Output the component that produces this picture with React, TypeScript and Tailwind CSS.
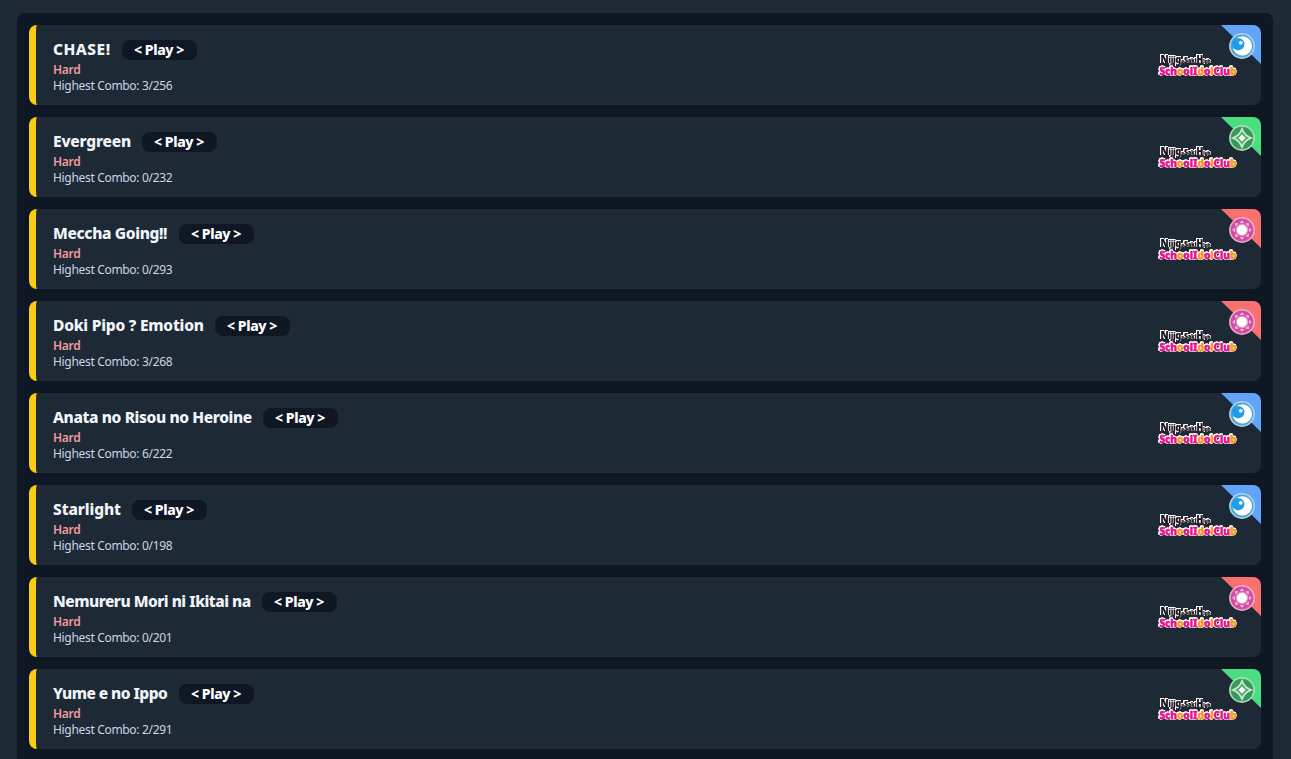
import React from "react";

type Attribute = "cool" | "pure" | "smile";

interface Song {
  title: string;
  combo: string;
  attribute: Attribute;
  titleClass: string;
}

const songs: Song[] = [
  { title: "CHASE!", combo: "3/256", attribute: "cool", titleClass: "w-[69px] tracking-[0.5px]" },
  { title: "Evergreen", combo: "0/232", attribute: "pure", titleClass: "w-[89px] tracking-[-0.2px]" },
  { title: "Meccha Going!!", combo: "0/293", attribute: "smile", titleClass: "w-[126px] tracking-[-0.35px]" },
  { title: "Doki Pipo ? Emotion", combo: "3/268", attribute: "smile", titleClass: "w-[162px] tracking-[-0.23px]" },
  { title: "Anata no Risou no Heroine", combo: "6/222", attribute: "cool", titleClass: "w-[210px] tracking-[-0.38px]" },
  { title: "Starlight", combo: "0/198", attribute: "cool", titleClass: "w-[79px] tracking-[-0.1px]" },
  { title: "Nemureru Mori ni Ikitai na", combo: "0/201", attribute: "smile", titleClass: "w-[209px] tracking-[-0.5px]" },
  { title: "Yume e no Ippo", combo: "2/291", attribute: "pure", titleClass: "w-[126px] tracking-[-0.54px]" },
];

const cornerColor: Record<Attribute, string> = {
  cool: "#60a5fa",
  pure: "#4ade80",
  smile: "#f87171",
};

function AttributeCorner({ attribute }: { attribute: Attribute }) {
  return (
    <svg className="absolute right-0 top-0" width="40" height="40" viewBox="0 0 40 40">
      <path d="M0 0H40V39Z" fill={cornerColor[attribute]} />
      {attribute === "cool" && (
        <g>
          <circle cx="21" cy="21" r="12.9" fill="#b9d3e2" />
          <circle cx="21" cy="21" r="11.4" fill="#45a9df" />
          <circle cx="21.4" cy="20.9" r="9.6" fill="#fff" />
          <circle cx="17.2" cy="19.2" r="6.2" fill="#209de8" />
          <circle cx="19.8" cy="17.8" r="1.9" fill="#fff" />
        </g>
      )}
      {attribute === "pure" && (
        <g>
          <circle cx="21" cy="21" r="12.9" fill="#a5dfb5" />
          <circle cx="21" cy="21" r="11.2" fill="#37985a" />
          <path d="M21 12Q23.5 18.5 30 21Q23.5 23.5 21 30Q18.5 23.5 12 21Q18.5 18.5 21 12Z" fill="#58aa74" stroke="#cdebd2" strokeWidth="1.8" />
          <path d="M21 17.5L24.5 21L21 24.5L17.5 21Z" fill="#f5fff4" />
        </g>
      )}
      {attribute === "smile" && (
        <g>
          <circle cx="21" cy="21" r="12.9" fill="#edb1cb" />
          <circle cx="21" cy="21" r="11.4" fill="#d44ba3" />
          {[0, 45, 90, 135, 180, 225, 270, 315].map((angle) => (
            <path key={angle} d="M18.7 14L21 11.2L23.3 14Z" fill="#f5bedc" transform={`rotate(${angle} 21 21)`} />
          ))}
          <circle cx="21" cy="21" r="6.2" fill="#e99cca" />
          <circle cx="21" cy="21" r="5" fill="#fff" />
        </g>
      )}
    </svg>
  );
}

const pink = "#e8148c";
const orange = "#f59a22";

function ClubLogo() {
  return (
    <svg
      className="h-8 w-[82px] shrink-0 [filter:drop-shadow(0.7px_0_0_#fff)_drop-shadow(-0.7px_0_0_#fff)_drop-shadow(0_0.7px_0_#fff)_drop-shadow(0_-0.7px_0_#fff)]"
      viewBox="0 0 82 32"
    >
      <g fontFamily="'Noto Sans', sans-serif" fontWeight="900" strokeLinejoin="round">
        <text x="3.5" y="13.5" fill="#191018" stroke="#191018" strokeWidth="0.2" fontSize="7" textLength="50" lengthAdjust="spacingAndGlyphs">
          <tspan fontSize="11">N</tspan>
          <tspan fontSize="8">i</tspan>
          <tspan fontSize="8">j</tspan>
          <tspan fontSize="8">i</tspan>
          <tspan fontSize="10">g</tspan>
          <tspan fontSize="5">a</tspan>
          <tspan fontSize="8">S</tspan>
          <tspan fontSize="6">aki</tspan>
          <tspan fontSize="10">H</tspan>
          <tspan fontSize="5">igh</tspan>
        </text>
        <text x="2.5" y="25.5" fill={pink} stroke={pink} strokeWidth="0.5" fontSize="11" textLength="77" lengthAdjust="spacingAndGlyphs">
          <tspan>S</tspan>
          <tspan fontSize="10">c</tspan>
          <tspan>h</tspan>
          <tspan fill={orange} stroke={orange}>o</tspan>
          <tspan>o</tspan>
          <tspan>l</tspan>
          <tspan>I</tspan>
          <tspan fill={orange} stroke={orange}>d</tspan>
          <tspan>o</tspan>
          <tspan fill={orange} stroke={orange}>l</tspan>
          <tspan>C</tspan>
          <tspan>l</tspan>
          <tspan>u</tspan>
          <tspan fill={orange} stroke={orange}>b</tspan>
        </text>
      </g>
    </svg>
  );
}

function SongCard({ song }: { song: Song }) {
  return (
    <article className="relative flex h-20 shrink-0 items-center justify-between overflow-hidden rounded-lg border-l-[7px] border-[#facc15] bg-[#1e2936] pl-[17px] pr-[22px]">
      <div>
        <div className="mb-px flex h-6 items-center">
          <h2 className={`whitespace-nowrap text-[15.5px] font-extrabold leading-6 text-slate-100 ${song.titleClass}`}>{song.title}</h2>
          <button className="mt-0.5 h-5 w-[75px] whitespace-nowrap rounded-lg bg-[#0f1624] pr-px text-[14px] font-extrabold leading-5 tracking-[-0.4px] text-white">&lt; Play &gt;</button>
        </div>
        <p className="text-[12px] font-semibold leading-4 tracking-[-0.3px] text-[#f19b9d]">Hard</p>
        <p className="text-[12px] leading-4 tracking-[-0.32px] text-slate-300">Highest Combo: {song.combo}</p>
      </div>
      <ClubLogo />
      <AttributeCorner attribute={song.attribute} />
    </article>
  );
}

export default function App() {
  return (
    <main className="h-[759px] overflow-hidden bg-[#1e2936] pl-[17px] pr-[18px] pt-[13px] font-['Noto_Sans',sans-serif]">
      <section className="flex h-[800px] flex-col gap-3 rounded-lg bg-[#0f1624] p-3">
        {songs.map((song) => (
          <SongCard key={song.title} song={song} />
        ))}
      </section>
    </main>
  );
}
